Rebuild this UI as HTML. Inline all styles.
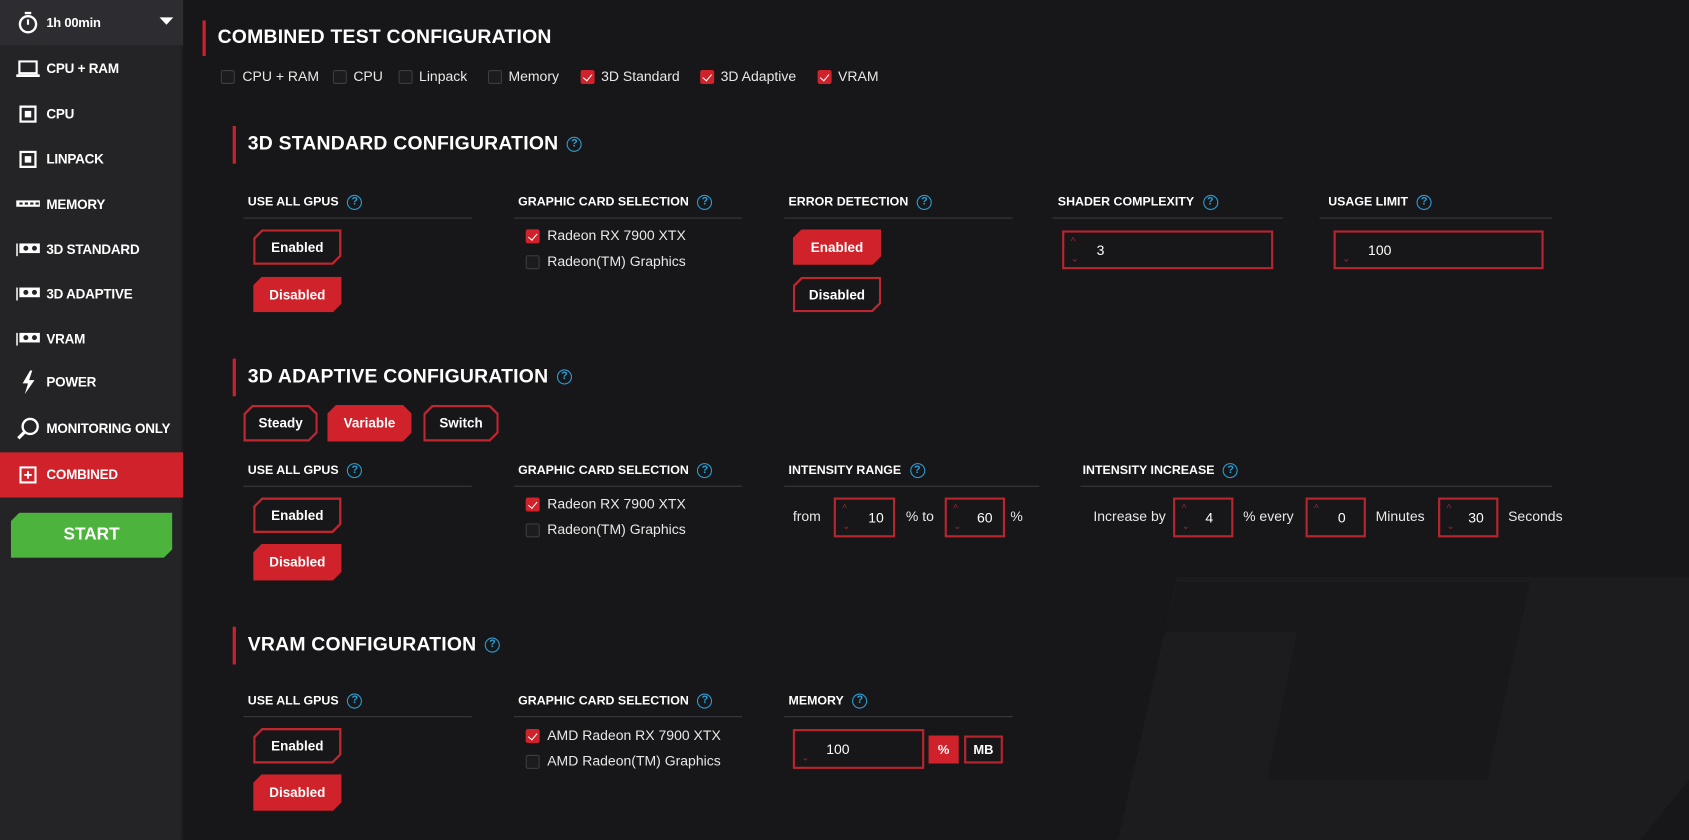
<!DOCTYPE html>
<html><head><meta charset="utf-8"><style>
*{margin:0;padding:0;box-sizing:border-box}
body{width:1689px;height:840px;overflow:hidden;background:#17171a;font-family:"Liberation Sans",sans-serif;color:#fff;position:relative}
#bg{position:absolute;left:0;top:0}
#s{position:absolute;left:0;top:0;width:1568px;height:780px;transform:scale(1.0772,1.0769);transform-origin:0 0}
.a{position:absolute}
.side{position:absolute;left:0;top:0;width:170px;height:780px;background:#242427;border-right:2px solid #1e1e21}
.top{position:absolute;left:0;top:0;width:170px;height:42px;background:#2d2d31}
.it{position:absolute;left:15px;font-weight:bold;font-size:12.5px;letter-spacing:-0.2px;display:flex;align-items:center;gap:6px;height:20px}
.ic{width:22px;display:flex;justify-content:center}
.tt{font-weight:bold;font-size:18px;letter-spacing:0.2px}
.bar{position:absolute;width:3px;background:#c8232c}
.lb{font-weight:bold;font-size:11.5px;letter-spacing:0}
.ul{position:absolute;height:1px;background:#3a3a3e}
.q{display:inline-block;width:14px;height:14px;border:1.6px solid #2a9fd6;border-radius:50%;color:#2a9fd6;font-size:10px;line-height:11px;text-align:center;font-weight:bold;vertical-align:middle;margin-left:8px}
.tx{font-size:13px;color:#e8e8e8}
.cb{position:absolute;width:13px;height:13px;border:1px solid #3d3d41;background:#1c1c1f;border-radius:2px}
.cb.on{background:#d0222b;border-color:#d0222b}
.cb.on:after{content:"";position:absolute;left:3px;top:1px;width:4px;height:7px;border:solid #fff;border-width:0 1.5px 1.5px 0;transform:rotate(40deg)}
.btn{position:absolute;font-size:12.5px;font-weight:bold;display:flex;align-items:center;justify-content:center;clip-path:polygon(8px 0,100% 0,100% calc(100% - 8px),calc(100% - 8px) 100%,0 100%,0 8px)}
.btn.f{background:#d0222b}
.btn.o{background:#c0262e}
.btn.o i{position:absolute;inset:2px;background:#17171a;clip-path:polygon(7px 0,100% 0,100% calc(100% - 7px),calc(100% - 7px) 100%,0 100%,0 7px)}
.btn span{position:relative}
.b3{clip-path:polygon(8px 0,calc(100% - 8px) 0,100% 8px,100% calc(100% - 8px),calc(100% - 8px) 100%,0 100%,0 8px)}
.b3 i{clip-path:polygon(7px 0,calc(100% - 7px) 0,100% 7px,100% calc(100% - 7px),calc(100% - 7px) 100%,0 100%,0 7px)!important}
.in{position:absolute;border:2px solid #b8252d;background:#17171a;font-size:13px;display:flex;align-items:center}
.ar{position:absolute;left:6px;color:#a8262d;font-size:9px;line-height:9px}
</style></head><body>
<svg id="bg" width="1689" height="840">
<polygon points="1177,577 1689,577 1689,780 1640,840 1118,840" fill="#1c1c1f"/>
<polygon points="1177,582 1530,582 1487,780 1267,780 1297,632 1165,632" fill="#18181b"/>
</svg>
<div id="s">
<div class="side">
<div class="top"></div>
<div class="it" style="top:11px"><div class="ic"><svg width="20" height="22" viewBox="0 0 20 22"><circle cx="10" cy="12.5" r="7.5" fill="none" stroke="#fff" stroke-width="2.2"/><rect x="7" y="1" width="6" height="2.2" fill="#fff"/><path d="M10 8v5" stroke="#fff" stroke-width="2"/></svg></div><span style="font-size:12px">1h 00min</span></div>
<svg class="a" style="left:148px;top:16px" width="13" height="8"><path d="M0 0h13L6.5 7z" fill="#fff"/></svg>
<div class="it" style="top:54px"><div class="ic"><svg width="22" height="16"><rect x="3" y="1" width="16" height="11" fill="none" stroke="#fff" stroke-width="2"/><rect x="0" y="13" width="22" height="2.5" fill="#fff"/></svg></div>CPU + RAM</div>
<div class="it" style="top:96px"><div class="ic"><svg width="16" height="16"><rect x="1" y="1" width="14" height="14" fill="none" stroke="#fff" stroke-width="2.2"/><rect x="5" y="5" width="6" height="6" fill="#fff"/></svg></div>CPU</div>
<div class="it" style="top:138px"><div class="ic"><svg width="16" height="16"><rect x="1" y="1" width="14" height="14" fill="none" stroke="#fff" stroke-width="2.2"/><rect x="5" y="5" width="6" height="6" fill="#fff"/></svg></div>LINPACK</div>
<div class="it" style="top:180px"><div class="ic"><svg width="24" height="8"><rect x="0" y="0" width="24" height="6" fill="#fff"/><rect x="3" y="2" width="3" height="2" fill="#242427"/><rect x="8" y="2" width="3" height="2" fill="#242427"/><rect x="13" y="2" width="3" height="2" fill="#242427"/><rect x="18" y="2" width="3" height="2" fill="#242427"/></svg></div>MEMORY</div>
<div class="it" style="top:222px"><div class="ic"><svg width="24" height="12"><rect x="0" y="0" width="1.5" height="12" fill="#fff"/><rect x="3" y="0" width="21" height="9" fill="#fff"/><circle cx="9" cy="4.5" r="2.3" fill="#242427"/><circle cx="17" cy="4.5" r="2.3" fill="#242427"/></svg></div>3D STANDARD</div>
<div class="it" style="top:263px"><div class="ic"><svg width="24" height="12"><rect x="0" y="0" width="1.5" height="12" fill="#fff"/><rect x="3" y="0" width="21" height="9" fill="#fff"/><circle cx="9" cy="4.5" r="2.3" fill="#242427"/><circle cx="17" cy="4.5" r="2.3" fill="#242427"/></svg></div>3D ADAPTIVE</div>
<div class="it" style="top:305px"><div class="ic"><svg width="24" height="12"><rect x="0" y="0" width="1.5" height="12" fill="#fff"/><rect x="3" y="0" width="21" height="9" fill="#fff"/><circle cx="9" cy="4.5" r="2.3" fill="#242427"/><circle cx="17" cy="4.5" r="2.3" fill="#242427"/></svg></div>VRAM</div>
<div class="it" style="top:345px"><div class="ic"><svg width="14" height="22"><path d="M9 0L2 12h5L4 22l9-13H8l3-9z" fill="#fff"/></svg></div>POWER</div>
<div class="a" style="left:0;top:420px;width:170px;height:42px;background:#d0222b"></div>
<div class="it" style="top:388px"><div class="ic"><svg width="22" height="22"><circle cx="13" cy="9" r="7" fill="none" stroke="#fff" stroke-width="2.2"/><path d="M8 14L2 20" stroke="#fff" stroke-width="3"/></svg></div>MONITORING ONLY</div>
<div class="it" style="top:431px"><div class="ic"><svg width="16" height="16"><rect x="1" y="1" width="14" height="14" fill="none" stroke="#fff" stroke-width="2"/><path d="M8 4.5v7M4.5 8h7" stroke="#fff" stroke-width="1.8"/></svg></div>COMBINED</div>
<div class="btn f" style="left:10px;top:476px;width:150px;height:42px;background:#4cb43c;font-size:16px">START</div>
</div>

<div class="bar" style="left:188px;top:19px;height:33px"></div>
<div class="a tt" style="left:202px;top:24px">COMBINED TEST CONFIGURATION</div>
<div class="cb" style="left:205px;top:65px"></div><div class="a tx" style="left:225px;top:63px">CPU + RAM</div>
<div class="cb" style="left:309px;top:65px"></div><div class="a tx" style="left:328px;top:63px">CPU</div>
<div class="cb" style="left:370px;top:65px"></div><div class="a tx" style="left:389px;top:63px">Linpack</div>
<div class="cb" style="left:453px;top:65px"></div><div class="a tx" style="left:472px;top:63px">Memory</div>
<div class="cb on" style="left:539px;top:65px"></div><div class="a tx" style="left:558px;top:63px">3D Standard</div>
<div class="cb on" style="left:650px;top:65px"></div><div class="a tx" style="left:669px;top:63px">3D Adaptive</div>
<div class="cb on" style="left:759px;top:65px"></div><div class="a tx" style="left:778px;top:63px">VRAM</div>

<div class="bar" style="left:216px;top:117px;height:35px"></div>
<div class="a tt" style="left:230px;top:123px">3D STANDARD CONFIGURATION<span class="q">?</span></div>
<div class="a lb" style="left:230px;top:181px">USE ALL GPUS<span class="q">?</span></div>
<div class="a lb" style="left:481px;top:181px">GRAPHIC CARD SELECTION<span class="q">?</span></div>
<div class="a lb" style="left:732px;top:181px">ERROR DETECTION<span class="q">?</span></div>
<div class="a lb" style="left:982px;top:181px">SHADER COMPLEXITY<span class="q">?</span></div>
<div class="a lb" style="left:1233px;top:181px">USAGE LIMIT<span class="q">?</span></div>
<div class="ul" style="left:226px;top:202px;width:212px"></div>
<div class="ul" style="left:477px;top:202px;width:212px"></div>
<div class="ul" style="left:728px;top:202px;width:212px"></div>
<div class="ul" style="left:977px;top:202px;width:214px"></div>
<div class="ul" style="left:1225px;top:202px;width:216px"></div>
<div class="btn o" style="left:235px;top:213px;width:82px;height:33px"><i></i><span>Enabled</span></div>
<div class="btn f" style="left:235px;top:257px;width:82px;height:33px"><span>Disabled</span></div>
<div class="cb on" style="left:488px;top:213px"></div><div class="a tx" style="left:508px;top:211px">Radeon RX 7900 XTX</div>
<div class="cb" style="left:488px;top:237px"></div><div class="a tx" style="left:508px;top:235px">Radeon(TM) Graphics</div>
<div class="btn f" style="left:736px;top:213px;width:82px;height:33px"><span>Enabled</span></div>
<div class="btn o" style="left:736px;top:257px;width:82px;height:33px"><i></i><span>Disabled</span></div>
<div class="in" style="left:986px;top:214px;width:196px;height:36px"><span class="ar" style="top:4px">^</span><span class="ar" style="top:20px">⌄</span><span style="margin-left:30px">3</span></div>
<div class="in" style="left:1238px;top:214px;width:195px;height:36px"><span class="ar" style="top:20px">⌄</span><span style="margin-left:30px">100</span></div>

<div class="bar" style="left:216px;top:333px;height:35px"></div>
<div class="a tt" style="left:230px;top:339px">3D ADAPTIVE CONFIGURATION<span class="q">?</span></div>
<div class="btn o b3" style="left:226px;top:376px;width:69px;height:34px"><i></i><span>Steady</span></div>
<div class="btn f b3" style="left:304px;top:376px;width:78px;height:34px"><span>Variable</span></div>
<div class="btn o b3" style="left:393px;top:376px;width:70px;height:34px"><i></i><span>Switch</span></div>
<div class="a lb" style="left:230px;top:430px">USE ALL GPUS<span class="q">?</span></div>
<div class="a lb" style="left:481px;top:430px">GRAPHIC CARD SELECTION<span class="q">?</span></div>
<div class="a lb" style="left:732px;top:430px">INTENSITY RANGE<span class="q">?</span></div>
<div class="a lb" style="left:1005px;top:430px">INTENSITY INCREASE<span class="q">?</span></div>
<div class="ul" style="left:226px;top:451px;width:212px"></div>
<div class="ul" style="left:477px;top:451px;width:212px"></div>
<div class="ul" style="left:728px;top:451px;width:237px"></div>
<div class="ul" style="left:1003px;top:451px;width:438px"></div>
<div class="btn o" style="left:235px;top:462px;width:82px;height:33px"><i></i><span>Enabled</span></div>
<div class="btn f" style="left:235px;top:505px;width:82px;height:34px"><span>Disabled</span></div>
<div class="cb on" style="left:488px;top:462px"></div><div class="a tx" style="left:508px;top:460px">Radeon RX 7900 XTX</div>
<div class="cb" style="left:488px;top:486px"></div><div class="a tx" style="left:508px;top:484px">Radeon(TM) Graphics</div>
<div class="a tx" style="left:736px;top:472px">from</div>
<div class="in" style="left:774px;top:462px;width:57px;height:37px"><span class="ar" style="top:4px">^</span><span class="ar" style="top:20px">⌄</span><span style="margin-left:30px">10</span></div>
<div class="a tx" style="left:841px;top:472px">% to</div>
<div class="in" style="left:877px;top:462px;width:56px;height:37px"><span class="ar" style="top:4px">^</span><span class="ar" style="top:20px">⌄</span><span style="margin-left:28px">60</span></div>
<div class="a tx" style="left:938px;top:472px">%</div>
<div class="a tx" style="left:1015px;top:472px">Increase by</div>
<div class="in" style="left:1089px;top:462px;width:56px;height:37px"><span class="ar" style="top:4px">^</span><span class="ar" style="top:20px">⌄</span><span style="margin-left:28px">4</span></div>
<div class="a tx" style="left:1154px;top:472px">% every</div>
<div class="in" style="left:1212px;top:462px;width:56px;height:37px"><span class="ar" style="top:4px">^</span><span style="margin-left:28px">0</span></div>
<div class="a tx" style="left:1277px;top:472px">Minutes</div>
<div class="in" style="left:1335px;top:462px;width:56px;height:37px"><span class="ar" style="top:4px">^</span><span class="ar" style="top:20px">⌄</span><span style="margin-left:26px">30</span></div>
<div class="a tx" style="left:1400px;top:472px">Seconds</div>

<div class="bar" style="left:216px;top:582px;height:35px"></div>
<div class="a tt" style="left:230px;top:588px">VRAM CONFIGURATION<span class="q">?</span></div>
<div class="a lb" style="left:230px;top:644px">USE ALL GPUS<span class="q">?</span></div>
<div class="a lb" style="left:481px;top:644px">GRAPHIC CARD SELECTION<span class="q">?</span></div>
<div class="a lb" style="left:732px;top:644px">MEMORY<span class="q">?</span></div>
<div class="ul" style="left:226px;top:665px;width:212px"></div>
<div class="ul" style="left:477px;top:665px;width:212px"></div>
<div class="ul" style="left:728px;top:665px;width:212px"></div>
<div class="btn o" style="left:235px;top:676px;width:82px;height:33px"><i></i><span>Enabled</span></div>
<div class="btn f" style="left:235px;top:719px;width:82px;height:34px"><span>Disabled</span></div>
<div class="cb on" style="left:488px;top:677px"></div><div class="a tx" style="left:508px;top:675px">AMD Radeon RX 7900 XTX</div>
<div class="cb" style="left:488px;top:701px"></div><div class="a tx" style="left:508px;top:699px">AMD Radeon(TM) Graphics</div>
<div class="in" style="left:736px;top:677px;width:122px;height:37px"><span class="ar" style="top:20px">⌄</span><span style="margin-left:29px">100</span></div>
<div class="a" style="left:862px;top:683px;width:28px;height:26px;background:#d0222b;font-size:12px;font-weight:bold;display:flex;align-items:center;justify-content:center">%</div>
<div class="a" style="left:895px;top:683px;width:36px;height:26px;border:2px solid #b8252d;font-size:12px;font-weight:bold;display:flex;align-items:center;justify-content:center">MB</div>
</div>
</body></html>
